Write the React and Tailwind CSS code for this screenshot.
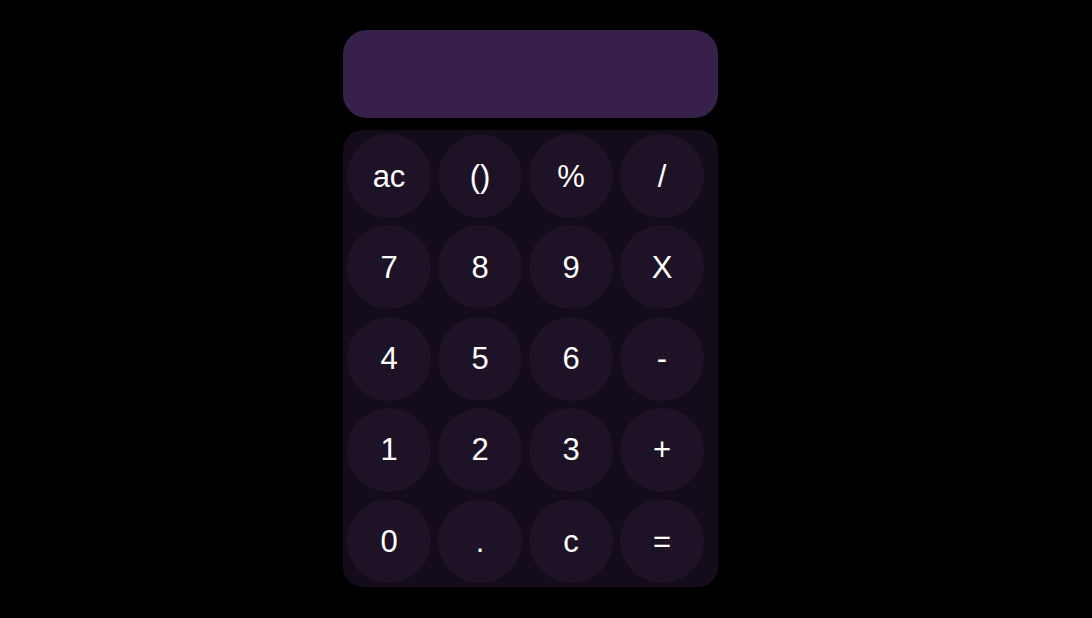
const KEYS = ['ac', '()', '%', '/', '7', '8', '9', 'X', '4', '5', '6', '-', '1', '2', '3', '+', '0', '.', 'c', '=']

export default function App() {
  return (
    <div className="min-h-[618px] bg-black pt-[30px] pl-[343px]" style={{ fontFamily: '"Liberation Sans", Arial, sans-serif' }}>
      <div className="w-[375px] h-[88px] rounded-[24px] bg-[#37204a]" />
      <div className="mt-[12px] w-[375px] rounded-[20px] bg-[#140c1a] pt-[4px] pb-[4px] pl-[4px] grid grid-cols-[repeat(4,84px)] gap-x-[7px] gap-y-[7.25px]">
        {KEYS.map((k) => (
          <button key={k} className="w-[84px] h-[84px] rounded-full bg-[#1e1326] text-white text-[31px] leading-none flex items-center justify-center">
            {k}
          </button>
        ))}
      </div>
    </div>
  )
}
